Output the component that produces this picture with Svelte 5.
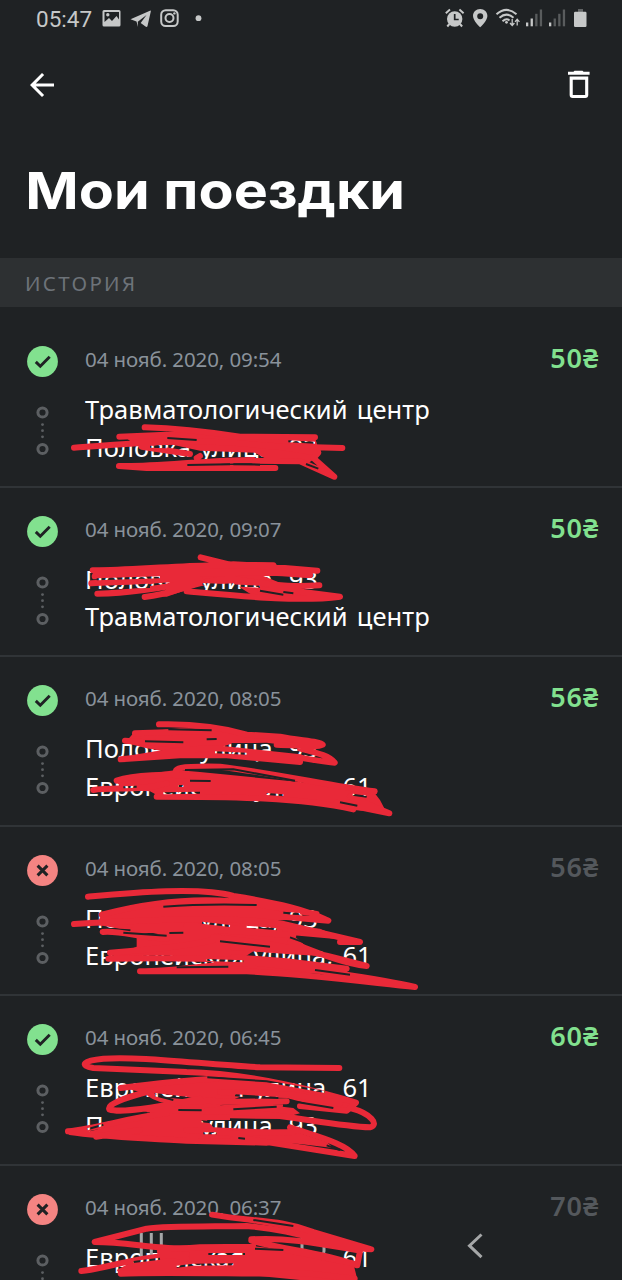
<script lang="ts">
type Trip = {
    date: string
    price: string
    done: boolean
    from: string
    to: string
}

const trips: Trip[] = [
    { date: '04 нояб. 2020, 09:54', price: '50₴', done: true, from: 'Травматологический центр', to: 'Половка улица, 93' },
    { date: '04 нояб. 2020, 09:07', price: '50₴', done: true, from: 'Половка улица, 93', to: 'Травматологический центр' },
    { date: '04 нояб. 2020, 08:05', price: '56₴', done: true, from: 'Половка улица, 93', to: 'Европейская улица, 61' },
    { date: '04 нояб. 2020, 08:05', price: '56₴', done: false, from: 'Половка улица, 93', to: 'Европейская улица, 61' },
    { date: '04 нояб. 2020, 06:45', price: '60₴', done: true, from: 'Европейская улица, 61', to: 'Половка улица, 93' },
    { date: '04 нояб. 2020, 06:37', price: '70₴', done: false, from: 'Европейская улица, 61', to: '' },
]

// marker strokes over the addresses, in thirds of a pixel from `top`
// `gap` is cut out of the strokes again
const marks = [
    {
        top: 330,
        fill: 'M370 318 L500 306 L560 300 L720 320 L945 324 L960 372 L925 400 L850 396 L800 388 L765 368 L600 362 L480 336 L400 340Z',
        line: 'M434 292 Q560 296 720 320 L945 322 M358 320 L500 314 M222 353 C400 340 600 322 800 348 L1027 354 M425 350 L570 372 M357 408 C460 412 620 390 760 390 M357 408 L440 414 L826 414 M590 384 L600 378 M760 392 L900 394 L1003 440 L940 384 M800 345 L955 368 L940 385',
        gap: 'M502 324L590 330M450 350L500 352M562 405L690 403M700 403L780 404M918 402L955 416M865 334L945 338',
    },
    {
        top: 500,
        fill: 'M275 206 L420 208 L600 192 L700 184 L820 190 L860 208 L950 212 L900 228 L860 228 L790 228 L840 248 L960 256 L860 266 L1020 290 L900 302 L780 300 L700 250 L600 256 L500 290 L430 288 L540 262 L490 240 L400 226 L280 226Z',
        line: 'M602 172 L690 194 L820 196 M278 211 C420 212 600 186 810 200 L952 212 M284 229 C400 226 640 200 930 226 M274 250 C400 244 520 240 600 230 M292 281 C400 280 500 262 600 240 M434 291 C540 280 580 240 700 236 C850 262 900 260 958 256 M560 274 C740 290 900 306 1020 290 L880 272 L780 270 M450 244 L560 222 L830 216',
        gap: 'M290 238L480 232M300 264L450 261M608 252L780 260M865 236L940 238M780 272L850 284M850 276L880 280',
    },
    {
        top: 680,
        fill: 'M400 160 L540 144 L620 148 L740 160 L820 172 L960 190 L860 196 L800 188 L700 190 L660 202 L820 220 L900 240 L760 232 L540 222 L440 205 L375 188Z M345 300 L420 284 L530 270 L600 276 L800 296 L960 312 L1120 334 L1140 360 L1160 398 L1060 390 L900 366 L760 354 L480 350 L450 334 L370 330Z',
        line: 'M477 133 C600 130 680 146 740 164 L840 170 C900 182 960 184 968 194 C950 204 900 196 830 194 M405 160 L640 152 M375 182 L560 196 M362 238 C440 234 500 206 660 204 M362 238 L540 226 L700 226 M640 222 L900 246 M660 206 L900 232 M900 206 C960 220 990 230 1004 248 C960 246 900 230 840 226 M536 286 C510 264 540 258 660 260 C840 282 1000 320 1124 334 M350 302 C400 284 500 280 600 290 M280 330 C340 320 420 334 500 310 M470 350 C700 350 900 352 1060 388 M1010 368 L1168 400 L1050 350',
        gap: 'M435 184L550 187M505 148L635 151M620 178L650 177M695 192L775 194M645 217L740 221M555 270L700 268L885 302M570 302L632 303M535 318L550 318M490 340L600 338M370 322L410 320M800 342L850 346M1058 344L1100 350M1020 367L1072 377',
    },
    {
        top: 850,
        fill: 'M305 192 L400 170 L520 154 L640 150 L760 164 L860 186 L860 210 L760 216 L960 236 L1040 270 L880 256 L920 290 L960 318 L860 312 L760 304 L720 330 L600 322 L480 316 L325 322 L410 290 L410 262 L500 244 L360 236 L290 224Z M420 362 L560 350 L700 332 L860 344 L960 348 L1060 374 L900 370 L700 358Z',
        line: 'M264 140 C400 128 600 110 700 138 C840 160 920 180 985 212 L850 200 M305 194 C480 148 640 136 800 168 L950 192 M222 222 C400 212 700 196 850 222 L1080 276 L1020 276 M308 246 C360 240 420 264 500 266 M330 308 C440 300 560 290 640 270 M325 326 C440 324 560 322 700 330 M640 262 C840 280 960 310 1100 348 C1040 342 980 320 870 276 M420 364 C540 364 640 340 760 338 C900 352 1140 386 1245 411 C1100 396 900 370 740 364 L420 364 M400 240 L640 240 L880 256 M560 226 L840 246 M700 292 L930 304 M700 322 L860 334 L1040 356',
        gap: 'M490 170Q620 160 770 165M370 248L500 257M508 249L550 248M660 274L810 290M530 352L685 350M945 360L1050 374M606 218L690 228M740 230L830 238M850 188L900 192M760 308L925 328M620 330L730 334M870 262L920 280',
    },
    {
        top: 1020,
        fill: 'M360 200 L480 186 L600 176 L700 172 L860 196 L1000 224 L1070 242 L1060 268 L960 260 L860 234 L720 230 L660 256 L760 250 L880 264 L900 280 L840 296 L760 300 L620 300 L640 322 L740 326 L880 332 L980 366 L1000 384 L900 372 L800 366 L560 366 L380 354 L250 340 L370 306 L450 286 L450 262 L530 256 L600 240 L560 230 L470 220 L420 216Z',
        line: 'M1018 144 L780 142 C600 132 420 108 310 116 C250 122 236 136 280 144 L560 156 C760 160 980 220 1068 248 L1040 272 L900 258 M362 204 C480 188 560 180 650 176 M440 216 C380 232 320 252 328 268 C360 280 460 264 600 236 M450 222 C480 246 560 252 640 240 M446 268 L700 276 C840 280 1000 318 1110 322 C1140 314 1110 280 1056 266 M204 334 C300 324 380 294 500 280 M210 336 C300 350 400 352 560 362 L800 368 M700 350 L1064 408 C1040 372 960 352 870 322 M620 272 L840 256 M288 350 L420 330 M660 216 L880 224 L1020 250 M640 246 L860 244 M560 330 L700 340 L880 336',
        gap: 'M622 172L800 184L975 216M705 226L835 234M890 246L1000 264M465 226L520 240M535 270L605 271M700 268L830 260M605 304L740 318M690 298L840 300M262 328L310 314M610 340L650 340M715 354L735 356M980 376L1020 390',
    },
    {
        top: 1180,
        fill: 'M350 270 L400 244 L520 206 L620 196 L740 196 L860 210 L1060 250 L1070 290 L1060 310 L900 300 L700 280 L520 276 L360 284Z M700 118 L860 126 L960 160 L1060 188 L1070 200 L960 176 L840 144Z',
        line: 'M636 104 C760 126 840 118 940 156 L1114 208 C1000 200 900 150 740 138 C640 140 500 138 440 146 L284 186 C400 186 480 214 600 202 L760 200 M754 178 C880 170 1000 200 1080 212 L1072 256 C960 214 860 212 754 182 M244 273 C320 266 400 230 560 222 M362 281 C480 274 800 284 920 280 L1064 296 M480 214 L560 236 M860 210 L1060 250',
        gap: 'M760 120L880 138M400 246L480 236M530 260L580 254L700 253M625 222L735 222M765 206L850 210',
    },
]
</script>

<div class="screen">
    <div class="statusbar">
        <span class="clock">05:47</span>
        <svg class="left-icons" viewBox="0 0 104 24" fill="#c6c8c8">
            <path fill-rule="evenodd" d="M2 3H17Q18.500 3 18.500 4.500V18Q18.500 19.500 17 19.500H2Q.5 19.500 .5 18V4.500Q.5 3 2 3ZM2.500 5V15L7 11L10 14L14.500 9L17 12.500V5ZM5.800 6A1.700 1.700 0 1 1 5.800 9.400A1.700 1.700 0 1 1 5.800 6Z" />
            <path d="M28.500 12.200L48.500 3.500Q49 3.500 48.800 4.500L45.500 19Q45 20.500 43.500 19.500L38.700 16L44.500 8L35.800 14.800L36 20L34.500 14.500Z" />
            <rect x="59.200" y="3.200" width="16.500" height="15.800" rx="4.500" fill="none" stroke="#c6c8c8" stroke-width="2" />
            <circle cx="67.500" cy="11" r="4" fill="none" stroke="#c6c8c8" stroke-width="2" />
            <circle cx="72.400" cy="6.400" r="1.200" />
            <circle cx="96.500" cy="11.200" r="2.900" />
        </svg>
        <svg class="right-icons" viewBox="0 0 144 24" fill="#c6c8c8">
            <circle cx="9.700" cy="12" r="7.700" />
            <path d="M9.700 7V12.500H13.700" fill="none" stroke="#1f2224" stroke-width="1.700" />
            <path d="M.8 6.200L5 2.600M18.600 6.200L14.400 2.600M4.400 17L2.300 19.500M15 17L17.100 19.500" fill="none" stroke="#c6c8c8" stroke-width="2" />
            <path fill-rule="evenodd" d="M35.200 2C31 2 28 5 28 9C28 13.700 35.200 20.300 35.200 20.300S42.400 13.700 42.400 9C42.400 5 39.400 2 35.200 2ZM35.200 6.200A3 3 0 1 1 35.200 12.200A3 3 0 1 1 35.200 6.200Z" />
            <path d="M51.500 7.300Q61.500 -1.500 71.500 7.300M54.500 10.800Q61.500 4.500 68.500 10.800M57.500 14.200Q61.500 10.800 64.500 13.500" fill="none" stroke="#c6c8c8" stroke-width="2" />
            <circle cx="61.500" cy="15.300" r="1.400" />
            <path d="M67.200 12V18M65 16L67.200 18.500L69.400 16M72.200 18.500V12.800M70 14.800L72.200 12.200L74.400 14.800" fill="none" stroke="#c6c8c8" stroke-width="1.300" />
            {#each [81, 104] as x}
                <rect {x} y="15.500" width="2.300" height="3.800" />
                <rect x={x + 4.600} y="11.500" width="2.300" height="7.800" opacity={x === 81 ? 1 : 0.35} />
                <rect x={x + 9.200} y="6.800" width="2.300" height="12.500" opacity=".35" />
                <rect x={x + 13.800} y="2.500" width="2.300" height="16.800" opacity=".35" />
            {/each}
            <rect x="133" y="2" width="5" height="3" opacity=".4" />
            <rect x="129" y="4.700" width="12.500" height="15.300" rx="1.200" />
        </svg>
    </div>

    <header>
        <button aria-label="Назад">
            <svg width="36" height="36" viewBox="0 0 24 24" fill="#fff">
                <path d="M20 11H7.830l5.590-5.590L12 4l-8 8 8 8 1.410-1.410L7.830 13H20v-2z" />
            </svg>
        </button>
        <button aria-label="Удалить">
            <svg width="22" height="29" viewBox="0 0 22 29">
                <path d="M0 1.700H5.500L6.500 .7H14.500L15.500 1.700H21.600V4.800H0Z" fill="#fff" />
                <path d="M3.200 8.100H18.700V25Q18.700 26.500 17.200 26.500H4.700Q3.200 26.500 3.200 25Z" fill="none" stroke="#fff" stroke-width="3.100" />
            </svg>
        </button>
    </header>

    <h1>Мои поездки</h1>
    <div class="section">ИСТОРИЯ</div>

    <div class="trips">
        {#each trips as trip}
            <div class="trip">
                <svg class="status" viewBox="0 0 31 31">
                    {#if trip.done}
                        <circle cx="15.500" cy="15.500" r="15.400" fill="#82e18f" />
                        <path d="M8.800 15.900L13.300 20.300L22.700 10.700" fill="none" stroke="#1f2224" stroke-width="2.900" />
                    {:else}
                        <circle cx="15.500" cy="15.500" r="15.400" fill="#f48482" />
                        <path d="M10.600 10.600L20.400 20.400M20.400 10.600L10.600 20.400" fill="none" stroke="#1f2224" stroke-width="3" />
                    {/if}
                </svg>
                <div class="date">{trip.date}</div>
                <div class="price" class:cancelled={!trip.done}>{trip.price}</div>
                <svg class="route" viewBox="0 0 13 50" fill="#5c5f62">
                    <circle cx="6.500" cy="6.500" r="4.600" fill="none" stroke="#5c5f62" stroke-width="3" />
                    <circle cx="6.500" cy="18.600" r="1.400" />
                    <circle cx="6.500" cy="24.700" r="1.400" />
                    <circle cx="6.500" cy="30.800" r="1.400" />
                    <circle cx="6.500" cy="43" r="4.600" fill="none" stroke="#5c5f62" stroke-width="3" />
                </svg>
                <div class="stops">
                    <div>{trip.from}</div>
                    {#if trip.to}<div>{trip.to}</div>{/if}
                </div>
            </div>
        {/each}
    </div>

    <svg class="navbar" viewBox="0 0 622 70" fill="none" stroke="#a5a7a8" stroke-width="3">
        <path d="M141.300 23V47M151.300 23V47M161.300 23V47" />
        <rect x="302" y="25" width="22" height="20" rx="4" />
        <path d="M481.500 24.500L469.500 35.700L481.500 47.200" />
    </svg>

    <svg class="marks" viewBox="0 0 1866 3840">
        {#each marks as mark, i}
            <mask id="gap-{i}" maskUnits="userSpaceOnUse" x="0" y="0" width="1866" height="500">
                <rect width="1866" height="500" fill="#fff" />
                <path d={mark.gap} fill="none" stroke="#000" stroke-width="6" />
            </mask>
            <g transform="translate(0 {mark.top * 3})" mask="url(#gap-{i})">
                <path d={mark.fill} fill="#e92938" />
                <path d={mark.line} fill="none" stroke="#e92938" stroke-width="18" stroke-linecap="round" stroke-linejoin="round" />
            </g>
        {/each}
    </svg>
</div>

<style>
:global(body) {
    margin: 0;
    background: #1f2224;
}
.screen {
    position: relative;
    width: 622px;
    height: 1280px;
    overflow: hidden;
    background: #1f2224;
    color: #fff;
    font-family: "Noto Sans", sans-serif;
    white-space: nowrap;
}
.statusbar {
    display: flex;
    align-items: center;
    height: 38px;
    padding: 0 33px 0 36px;
}
.clock {
    width: 66px;
    color: #c6c8c8;
    font: 22.500px/38px Roboto, sans-serif;
}
.left-icons {
    width: 104px;
    height: 24px;
}
.right-icons {
    width: 144px;
    height: 24px;
    margin-left: auto;
}
header {
    display: flex;
    align-items: center;
    justify-content: space-between;
    height: 92px;
    padding: 1px 32px 0 24px;
    box-sizing: border-box;
}
button {
    display: flex;
    padding: 0;
    border: 0;
    background: none;
}
h1 {
    height: 128px;
    margin: 0;
    padding-left: 22.500px;
    font: 700 51px/122px Inter, sans-serif;
    transform: scaleX(1.125);
    transform-origin: left;
}
.section {
    height: 49px;
    padding-left: 25px;
    background: #2d3032;
    color: #6d7379;
    font-size: 20.500px;
    line-height: 50px;
    letter-spacing: 2.300px;
}
.trips {
    padding-top: 11px;
}
.trip {
    display: grid;
    grid-template-columns: 58px 1fr auto;
    grid-template-rows: 54px 1fr;
    box-sizing: border-box;
    height: 169.500px;
    padding: 20px 23px 0 27px;
    border-bottom: 2px solid #303437;
}
.status {
    width: 31px;
    height: 31px;
    margin-top: 8px;
}
.date {
    color: #8a929b;
    font-size: 20.500px;
    line-height: 42px;
    letter-spacing: -.1px;
}
.price {
    color: #82e18f;
    font-size: 27px;
    font-weight: 600;
    line-height: 39px;
    letter-spacing: .9px;
}
.price.cancelled {
    color: #54585c;
}
.route {
    width: 13px;
    height: 50px;
    margin: 14px 0 0 9px;
}
.stops {
    grid-column: 2 / 4;
    margin-top: -1px;
    font-size: 25.500px;
    line-height: 37.500px;
    letter-spacing: .05px;
    word-spacing: 2.500px;
}
.navbar {
    position: absolute;
    left: 0;
    bottom: 0;
    width: 622px;
    height: 70px;
}
.marks {
    position: absolute;
    inset: 0;
    width: 622px;
    height: 1280px;
}
</style>
